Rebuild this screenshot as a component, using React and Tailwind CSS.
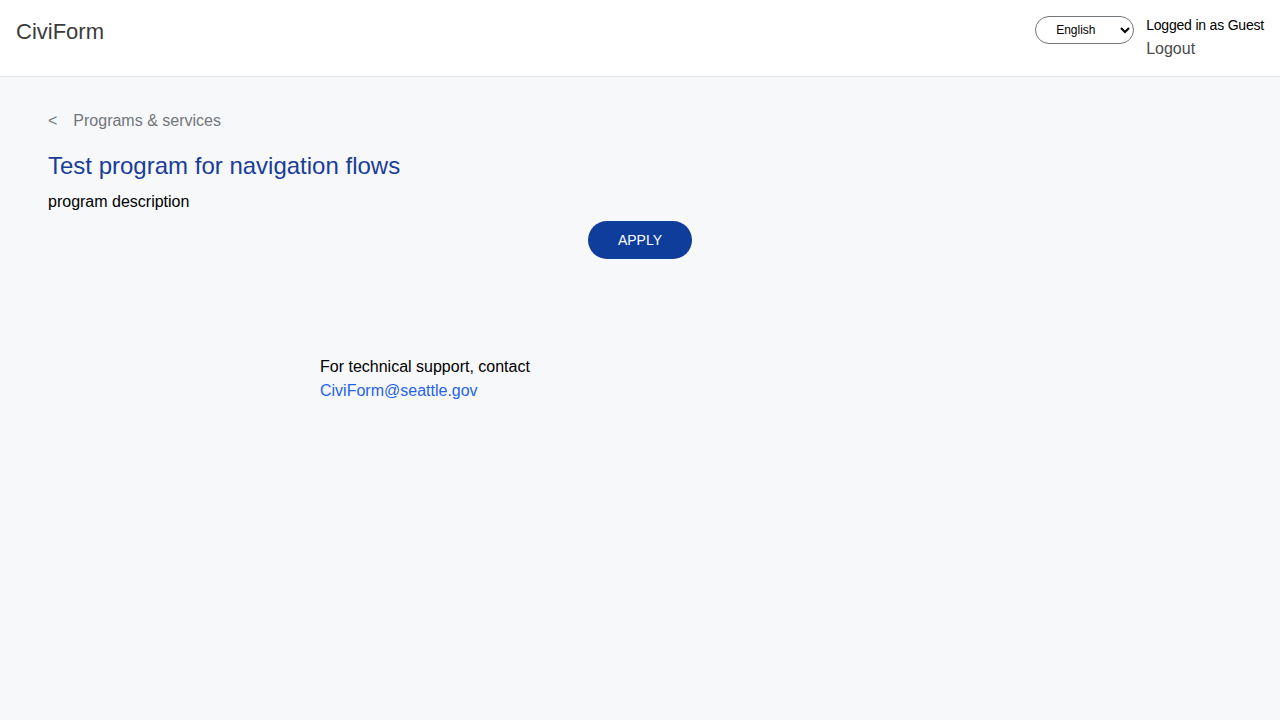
export default function App() {
  return (
    <div className="min-h-screen bg-[#f7f8fa] font-['Liberation_Sans',Arial,sans-serif] text-black">
      <header className="flex h-[77px] items-start justify-between border-b border-[#e5e7eb] bg-white px-4">
        <div className="pt-[18px] text-[22px] leading-[28px] text-[#3b3b3b]">CiviForm</div>
        <div className="flex items-start gap-3 pt-4">
          <select
            defaultValue="en"
            className="h-7 w-[99px] rounded-full border border-[#71767a] bg-white pl-4 pr-1 text-[12px] text-black"
          >
            <option value="en">English</option>
          </select>
          <div className="flex flex-col">
            <span className="text-[14px] leading-[18px] tracking-[-0.2px]">Logged in as Guest</span>
            <a href="#" className="mt-[5px] text-[16px] leading-5 text-[#4b4b4b]">
              Logout
            </a>
          </div>
        </div>
      </header>

      <main className="px-12 pt-[34px]">
        <a href="#" className="flex items-center text-[16px] leading-5 text-[#71767a]">
          <span className="mr-4">&lt;</span>
          <span>Programs &amp; services</span>
        </a>
        <h1 className="mt-[20px] text-[24px] leading-[30px] text-[#1a3d99]">
          Test program for navigation flows
        </h1>
        <p className="mt-[11px] text-[16px] leading-5">program description</p>
        <div className="mt-[9px] flex justify-center">
          <button className="h-[38px] w-[104px] rounded-full bg-[#0f3d9c] text-[14px] text-white">
            APPLY
          </button>
        </div>
      </main>

      <footer className="pl-[320px] pt-[96px] text-[16px] leading-6">
        <div>For technical support, contact</div>
        <a href="#" className="text-[#2563eb]">
          CiviForm@seattle.gov
        </a>
      </footer>
    </div>
  );
}
